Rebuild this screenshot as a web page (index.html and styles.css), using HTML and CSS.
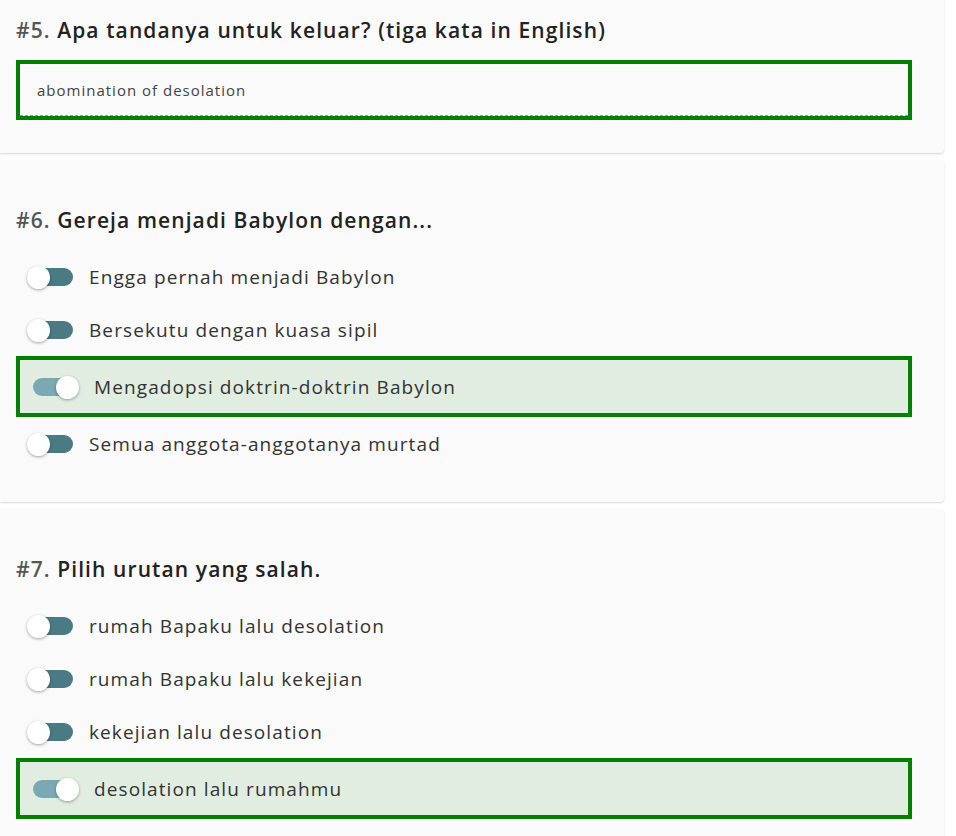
FILE: index.html
```html
<!DOCTYPE html>
<html lang="id">
<head>
<meta charset="utf-8">
<title>Quiz</title>
<link rel="stylesheet" href="styles.css">
</head>
<body>
<main class="quiz">
  <section class="card">
    <h2 class="question"><span class="num">#5.</span> Apa tandanya untuk keluar? (tiga kata in English)</h2>
    <div class="answer-box">
      <div class="answer-input">abomination of desolation</div>
    </div>
  </section>

  <section class="card">
    <h2 class="question"><span class="num">#6.</span> Gereja menjadi Babylon dengan...</h2>
    <ul class="options">
      <li class="option"><span class="toggle"><span class="knob"></span></span><span class="label">Engga pernah menjadi Babylon</span></li>
      <li class="option"><span class="toggle"><span class="knob"></span></span><span class="label">Bersekutu dengan kuasa sipil</span></li>
      <li class="option selected"><span class="toggle on"><span class="knob"></span></span><span class="label">Mengadopsi doktrin-doktrin Babylon</span></li>
      <li class="option"><span class="toggle"><span class="knob"></span></span><span class="label">Semua anggota-anggotanya murtad</span></li>
    </ul>
  </section>

  <section class="card">
    <h2 class="question"><span class="num">#7.</span> Pilih urutan yang salah.</h2>
    <ul class="options">
      <li class="option"><span class="toggle"><span class="knob"></span></span><span class="label">rumah Bapaku lalu desolation</span></li>
      <li class="option"><span class="toggle"><span class="knob"></span></span><span class="label">rumah Bapaku lalu kekejian</span></li>
      <li class="option"><span class="toggle"><span class="knob"></span></span><span class="label">kekejian lalu desolation</span></li>
      <li class="option selected"><span class="toggle on"><span class="knob"></span></span><span class="label">desolation lalu rumahmu</span></li>
    </ul>
  </section>
</main>
</body>
</html>
```
FILE: styles.css
```css
* { box-sizing: border-box; }

html, body {
  margin: 0;
  padding: 0;
  background: #ffffff;
  font-family: "Open Sans", "DejaVu Sans", sans-serif;
  overflow: hidden;
}

.quiz {
  margin-top: -30px;
}

.card {
  width: 944px;
  background: #fafafa;
  border-radius: 0 4px 4px 0;
  box-shadow: 0 1px 2px rgba(0, 0, 0, 0.16);
  padding: 45px 0 33px 16px;
  margin-bottom: 7px;
}

.card + .card {
  padding-bottom: 32px;
}

.question {
  margin: 0 0 15px;
  height: 30px;
  line-height: 30px;
  font-size: 21px;
  font-weight: 600;
  color: #222;
  letter-spacing: 1.1px;
}

.num {
  color: #555;
}

.answer-box {
  width: 896px;
  height: 60px;
  border: 4px solid #008000;
  background: #fafafa;
}

.answer-input {
  height: 52px;
  line-height: 52px;
  padding-left: 17px;
  font-size: 15px;
  color: #444;
  letter-spacing: 1px;
  border-bottom: 1px dashed #9a9a9a;
}

.options {
  list-style: none;
  margin: 0;
  padding: 0;
  width: 896px;
}

.option {
  display: flex;
  align-items: center;
  gap: 15px;
  height: 53px;
  padding-left: 11px;
}

.option.selected {
  height: 61px;
  border: 4px solid #008000;
  background: #e1ede1;
  padding-left: 12px;
}

.toggle {
  position: relative;
  flex: none;
  width: 47px;
  height: 22px;
}

.toggle::before {
  content: "";
  position: absolute;
  left: 1px;
  right: 1px;
  top: 2px;
  height: 18px;
  border-radius: 9px;
  background: #4a7a84;
}

.toggle.on::before {
  right: 3px;
  background: #7aa8b3;
}

.knob {
  position: absolute;
  top: 0;
  left: 0;
  width: 23px;
  height: 23px;
  border-radius: 50%;
  background: #ffffff;
  box-shadow: 0 1px 3px rgba(0, 0, 0, 0.35);
}

.toggle.on .knob {
  left: auto;
  right: 0;
}

.label {
  font-size: 19px;
  color: #333;
  letter-spacing: 1.1px;
  line-height: 24px;
}
```
